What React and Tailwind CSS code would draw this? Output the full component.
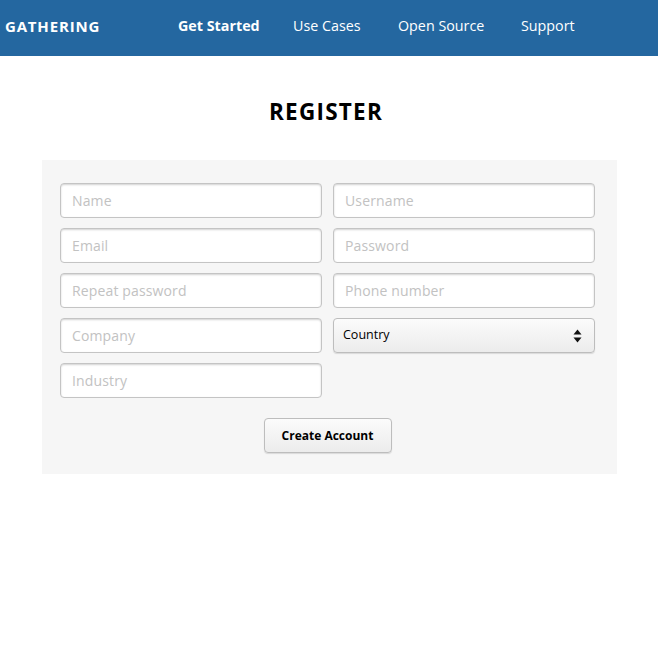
import React from "react";

const font = { fontFamily: '"Open Sans", "Noto Sans", sans-serif' };

function Field({ placeholder }) {
  return (
    <input
      placeholder={placeholder}
      className="h-[35px] w-full rounded-[4px] border border-[#c4c4c4] bg-white px-[11px] text-[14px] tracking-[0.01em] text-[#333] shadow-[inset_0_1px_2px_rgba(0,0,0,0.18)] outline-none placeholder:text-[#c2c2c2]"
    />
  );
}

export default function App() {
  return (
    <div className="min-h-[658px] bg-white" style={font}>
      <nav className="flex h-[56px] items-center bg-[#2467a0] pb-[4px] text-white">
        <div className="w-[178px] pl-[5px] text-[15px] font-bold tracking-[0.055em]">GATHERING</div>
        <div className="flex items-center text-[14.3px]">
          <span className="w-[115px] font-bold">Get Started</span>
          <span className="w-[105px]">Use Cases</span>
          <span className="w-[123px]">Open Source</span>
          <span>Support</span>
        </div>
      </nav>
      <h1 className="mt-[40px] pr-[6px] text-center text-[22.5px] font-bold leading-[32px] tracking-[0.055em] text-black">REGISTER</h1>
      <div className="mx-[42px] mt-[32px] w-[575px] bg-[#f6f6f6] pb-[21px] pl-[18px] pr-[22px] pt-[23px]">
        <div className="grid grid-cols-2 gap-x-[11px] gap-y-[10px]">
          <Field placeholder="Name" />
          <Field placeholder="Username" />
          <Field placeholder="Email" />
          <Field placeholder="Password" />
          <Field placeholder="Repeat password" />
          <Field placeholder="Phone number" />
          <Field placeholder="Company" />
          <div className="relative flex h-[35px] items-center rounded-[4px] border border-[#bdbdbd] bg-gradient-to-b from-[#fbfbfb] to-[#ececec] px-[9px] text-[12.5px] text-black shadow-[0_1px_1px_rgba(0,0,0,0.12)]">
            Country
            <svg className="absolute right-[12px] top-1/2 -translate-y-1/2" width="9" height="14" viewBox="0 0 9 14">
              <path d="M4.5 0.5 L8.5 5.5 L0.5 5.5 Z" fill="#111" />
              <path d="M0.5 8.5 L8.5 8.5 L4.5 13.5 Z" fill="#111" />
            </svg>
          </div>
          <Field placeholder="Industry" />
        </div>
        <div className="mt-[20px] flex justify-center">
          <button className="h-[35px] w-[128px] rounded-[4px] border border-[#bdbdbd] bg-gradient-to-b from-[#fbfbfb] to-[#ececec] text-[12px] font-bold text-black shadow-[0_1px_1px_rgba(0,0,0,0.12)]">
            Create Account
          </button>
        </div>
      </div>
    </div>
  );
}
